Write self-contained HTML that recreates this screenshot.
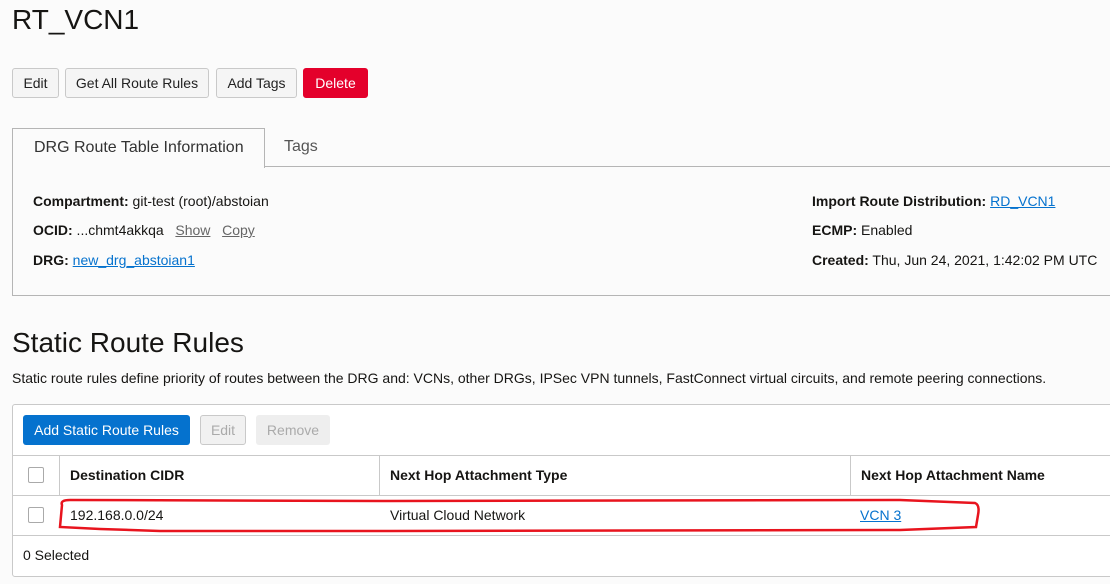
<!DOCTYPE html><html><head><style>
body{margin:0;width:1110px;height:584px;background:#fbfbfb;font-family:"Liberation Sans",sans-serif;color:#161513;position:relative;overflow:hidden;font-size:14px}
.a{position:absolute}
.btn{position:absolute;top:68px;height:28px;border:1px solid #c9c9c9;border-radius:3px;background:#f5f5f5;font-size:14px;line-height:28px;text-align:center;color:#222}
b{font-weight:bold}
a{color:#0572ce;text-decoration:underline}
.g{color:#666;text-decoration:underline}
</style></head><body>
<div class="a" style="left:12px;top:4px;font-size:28px">RT_VCN1</div>
<div class="btn" style="left:12px;width:45px">Edit</div>
<div class="btn" style="left:65px;width:142px">Get All Route Rules</div>
<div class="btn" style="left:216px;width:79px">Add Tags</div>
<div class="btn" style="left:303px;width:63px;background:#e4002b;border-color:#e4002b;color:#fff">Delete</div>
<div class="a" style="left:12px;top:166px;width:1110px;height:128px;border:1px solid #b5b5b5;background:#fbfbfb"></div>
<div class="a" style="left:12px;top:128px;width:251px;height:39px;border:1px solid #b5b5b5;border-bottom:none;background:#fbfbfb;font-size:16px;line-height:38px;text-indent:21px;color:#333">DRG Route Table Information</div>
<div class="a" style="left:284px;top:138px;font-size:16px;color:#555">Tags</div>
<div class="a" style="left:33px;top:193px"><b>Compartment:</b> git-test (root)/abstoian</div>
<div class="a" style="left:33px;top:222px"><b>OCID:</b> ...chmt4akkqa &nbsp; <span class="g">Show</span> &nbsp; <span class="g">Copy</span></div>
<div class="a" style="left:33px;top:252px"><b>DRG:</b> <a>new_drg_abstoian1</a></div>
<div class="a" style="left:812px;top:193px"><b>Import Route Distribution:</b> <a>RD_VCN1</a></div>
<div class="a" style="left:812px;top:222px"><b>ECMP:</b> Enabled</div>
<div class="a" style="left:812px;top:252px"><b>Created:</b> Thu, Jun 24, 2021, 1:42:02 PM UTC</div>
<div class="a" style="left:12px;top:327px;font-size:28px">Static Route Rules</div>
<div class="a" style="left:12px;top:370px">Static route rules define priority of routes between the DRG and: VCNs, other DRGs, IPSec VPN tunnels, FastConnect virtual circuits, and remote peering connections.</div>
<div class="a" style="left:12px;top:404px;width:1110px;height:171px;border:1px solid #c9c9c9;border-radius:3px;background:#fff"></div>
<div class="a" style="left:23px;top:415px;width:167px;height:30px;background:#0572ce;border-radius:3px;color:#fff;line-height:30px;text-align:center">Add Static Route Rules</div>
<div class="a" style="left:200px;top:415px;width:44px;height:28px;border:1px solid #c9c9c9;border-radius:3px;background:#f1f1f1;color:#aaa;line-height:28px;text-align:center">Edit</div>
<div class="a" style="left:256px;top:415px;width:74px;height:30px;background:#eee;border-radius:3px;color:#aaa;line-height:30px;text-align:center">Remove</div>
<div class="a" style="left:13px;top:455px;width:1110px;border-top:1px solid #c9c9c9"></div>
<div class="a" style="left:13px;top:495px;width:1110px;border-top:1px solid #c9c9c9"></div>
<div class="a" style="left:13px;top:535px;width:1110px;border-top:1px solid #c9c9c9"></div>
<div class="a" style="left:59px;top:456px;height:39px;border-left:1px solid #c9c9c9"></div>
<div class="a" style="left:379px;top:456px;height:39px;border-left:1px solid #c9c9c9"></div>
<div class="a" style="left:850px;top:456px;height:39px;border-left:1px solid #c9c9c9"></div>
<div class="a" style="left:28px;top:467px;width:14px;height:14px;border:1px solid #aaa;border-radius:2px"></div>
<div class="a" style="left:28px;top:507px;width:14px;height:14px;border:1px solid #aaa;border-radius:2px"></div>
<div class="a" style="left:70px;top:467px"><b>Destination CIDR</b></div>
<div class="a" style="left:390px;top:467px"><b>Next Hop Attachment Type</b></div>
<div class="a" style="left:861px;top:467px"><b>Next Hop Attachment Name</b></div>
<div class="a" style="left:70px;top:507px">192.168.0.0/24</div>
<div class="a" style="left:390px;top:507px">Virtual Cloud Network</div>
<div class="a" style="left:860px;top:507px"><a>VCN 3</a></div>
<div class="a" style="left:23px;top:547px">0 Selected</div>
<svg class="a" style="left:0;top:0" width="1110" height="584"><path d="M62 505 Q60 500 70 500 L390 501 L900 500 L975 503 Q980 505 978 515 L976 527 L900 530 L390 531 L160 531 L100 529 L60 527 Z" fill="none" stroke="#e8141e" stroke-width="2.5"/></svg>
</body></html>
